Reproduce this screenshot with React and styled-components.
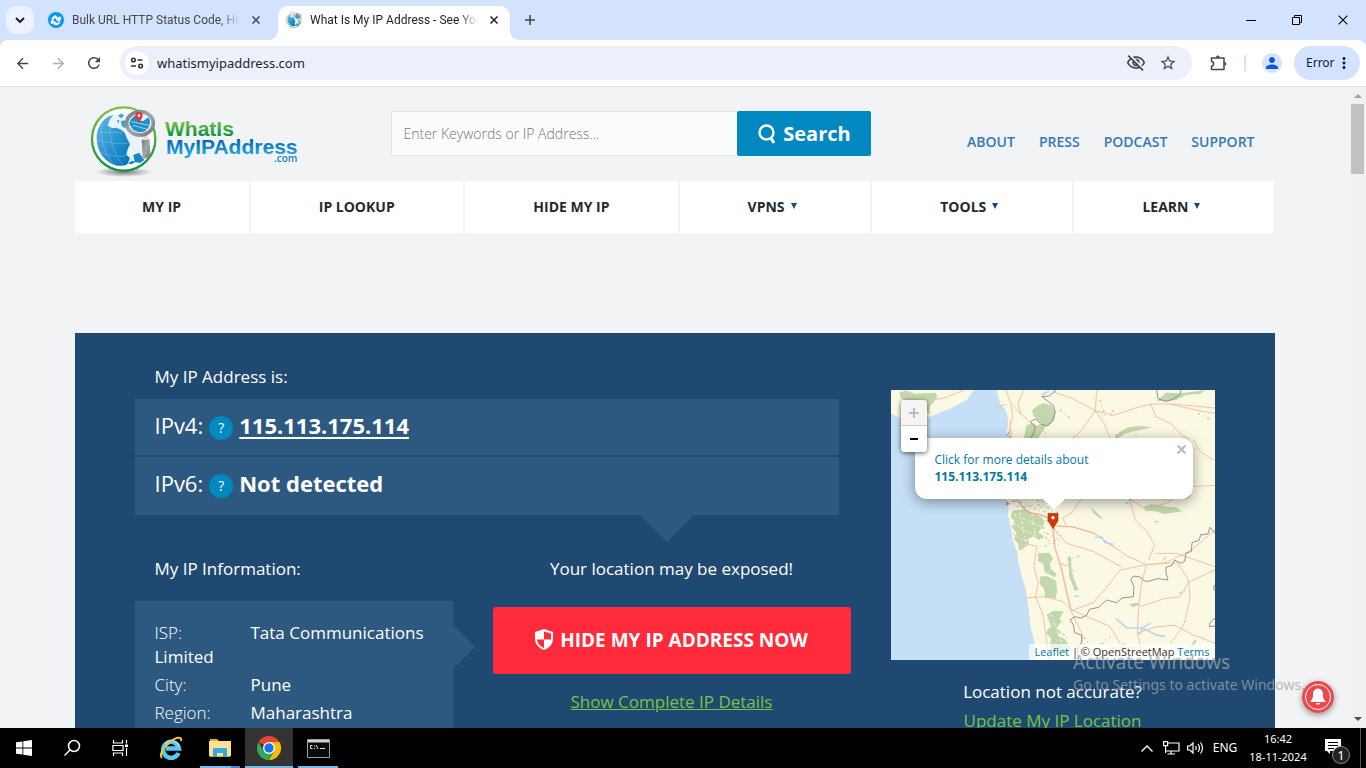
import React from "react";
import styled, { createGlobalStyle } from "styled-components";
import {
  MdArrowBack,
  MdArrowForward,
  MdRefresh,
  MdStarBorder,
  MdOutlineVisibilityOff,
  MdPerson,
  MdMoreVert,
} from "react-icons/md";

const GlobalStyle = createGlobalStyle`
  * { box-sizing: border-box; }
  html, body, #root { height: 100%; margin: 0; }
  body { overflow: hidden; font-family: "Open Sans", "Noto Sans", sans-serif; }
  button { border: 0; padding: 0; margin: 0; background: none; font: inherit; color: inherit; }
  a { color: inherit; text-decoration: none; }
  p, h2, ul { margin: 0; padding: 0; font-weight: inherit; }
  svg { display: block; flex: none; }
`;

const Desktop = styled.div`
  display: flex;
  flex-direction: column;
  height: 100vh;
  overflow: hidden;
  background: #d3e2fd;
`;

/* ---------- browser chrome ---------- */

const TabStrip = styled.div`
  display: flex;
  height: 40px;
  flex: none;
  padding-left: 6px;
  background: #d3e2fd;
`;

const TabSearch = styled.button`
  display: grid;
  place-items: center;
  width: 28px;
  height: 28px;
  margin-top: 6px;
  border-radius: 10px;
  background: #ecf2fe;
`;

const Tab = styled.div`
  position: relative;
  display: flex;
  align-items: center;
  gap: 8px;
  width: ${(p) => (p.$active ? 232 : 244)}px;
  height: 34px;
  margin-top: 6px;
  padding: ${(p) => (p.$active ? "0 8px 6px" : "0 14px 6px")};
  border-radius: 10px 10px 0 0;
  background: ${(p) => (p.$active ? "#fff" : "transparent")};
  color: ${(p) => (p.$active ? "#1f1f1f" : "#474747")};
  &::before, &::after {
    content: "";
    display: ${(p) => (p.$active ? "block" : "none")};
    position: absolute;
    bottom: 0;
    width: 10px;
    height: 10px;
  }
  &::before {
    left: -10px;
    background: radial-gradient(circle at 0 0, transparent 10px, #fff 10px);
  }
  &::after {
    right: -10px;
    background: radial-gradient(circle at 100% 0, transparent 10px, #fff 10px);
  }
`;

const TabTitle = styled.span`
  flex: 1;
  overflow: hidden;
  white-space: nowrap;
  font: 12px/18px Roboto, "Noto Sans", sans-serif;
  mask-image: linear-gradient(to right, #000 calc(100% - 20px), transparent);
`;

const IconButton = styled.button`
  display: grid;
  place-items: center;
  flex: none;
  width: ${(p) => p.$w || 28}px;
  height: ${(p) => p.$h || 28}px;
  color: ${(p) => p.$color || "#474747"};
`;

const NewTab = styled(IconButton)`
  margin: 6px 0 0 6px;
`;

const WindowControls = styled.div`
  display: flex;
  margin-left: auto;
`;

const Toolbar = styled.div`
  display: flex;
  align-items: center;
  flex: none;
  height: 47px;
  padding: 0 6px 0 8px;
  border-bottom: 1px solid #dfe1e4;
  border-radius: 8px 8px 0 0;
  background: #fff;
`;

const NavButtons = styled.div`
  display: flex;
  gap: 8px;
  margin-right: 12px;
`;

const Omnibox = styled.div`
  display: flex;
  align-items: center;
  flex: 1;
  height: 34px;
  padding: 0 10px 0 5px;
  border-radius: 17px;
  background: #ecf0fa;
`;

const SiteInfo = styled.button`
  display: grid;
  place-items: center;
  width: 24px;
  height: 24px;
  border-radius: 50%;
  background: #fff;
`;

const UrlInput = styled.input`
  flex: 1;
  min-width: 0;
  margin-left: 8px;
  padding: 0;
  border: 0;
  outline: 0;
  background: none;
  color: #1f1f1f;
  font: 13px/20px "Noto Sans", sans-serif;
`;

const OmniActions = styled.div`
  display: flex;
  gap: 4px;
`;

const ToolbarDivider = styled.span`
  width: 2px;
  height: 16px;
  margin-right: 12px;
  background: #d3e2fd;
`;

const Avatar = styled.button`
  display: grid;
  place-items: center;
  width: 20px;
  height: 20px;
  margin: 0 12px 0 4px;
  border-radius: 50%;
  background: #d3e2fd;
  color: #0b57d0;
`;

const ErrorChip = styled.button`
  display: flex;
  align-items: center;
  height: 34px;
  width: 66px;
  padding-left: 12px;
  border-radius: 17px;
  background: #d3e2fd;
  color: #041e49;
  font: 12px/16px "Noto Sans", sans-serif;
`;

/* ---------- web page ---------- */

const Viewport = styled.div`
  position: relative;
  display: flex;
  flex: 1;
  min-height: 0;
  background: #f1f3f5;
`;

const Page = styled.main`
  flex: 1;
  min-width: 0;
  overflow: hidden;
`;

const Container = styled.div`
  max-width: 1200px;
  margin: 0 auto;
`;

const Scrollbar = styled.div`
  display: flex;
  flex-direction: column;
  align-items: center;
  width: 17px;
  padding: 7px 0;
  background: #f1f1f1;
`;

const Thumb = styled.div`
  width: 13px;
  height: 70px;
  margin: 6px 0 auto;
  background: #c1c1c1;
`;

const Header = styled.header`
  display: flex;
  height: 94px;
  padding: 0 20px 0 15px;
`;

const LogoLink = styled.a`
  width: 301px;
  padding-top: 18px;
`;

const SearchForm = styled.form`
  display: flex;
  width: 480px;
  height: 45px;
  margin-top: 24px;
`;

const SearchInput = styled.input`
  flex: 1;
  min-width: 0;
  padding: 0 12px;
  border: 1px solid #e3e5e6;
  border-right: 0;
  background: #fcfcfc;
  font: 300 14px/20px "Open Sans", sans-serif;
  &::placeholder { color: #777; opacity: 1; }
`;

const SearchButton = styled.button`
  display: flex;
  align-items: center;
  justify-content: center;
  gap: 7px;
  width: 134px;
  padding-left: 2px;
  border-radius: 2px;
  background: #0088c1;
  color: #fff;
  font-size: 20px;
  font-weight: 700;
`;

const TopLinks = styled.nav`
  display: flex;
  gap: 24px;
  margin: 44px 0 0 auto;
  color: #337ab7;
  font-size: 14px;
  font-weight: 600;
  line-height: 22px;
`;

const MainMenu = styled.nav`
  display: grid;
  grid-template-columns: 174fr 212fr 213fr 190fr 200fr 200fr;
  gap: 2px;
`;

const MenuItem = styled.a`
  display: flex;
  align-items: center;
  justify-content: center;
  gap: 6px;
  height: 52px;
  padding: 0 ${(p) => (p.$drop ? 6 : 0)}px 2px 0;
  background: #fff;
  color: #24292f;
  font-size: 14px;
  font-weight: 700;
`;

const Panel = styled.section`
  display: flex;
  justify-content: space-between;
  min-height: 560px;
  margin-top: 100px;
  padding: 32px 60px;
  background: #1f4971;
  color: #fff;
  font-size: 17px;
`;

const MainColumn = styled.div`
  width: 704px;
`;

const Caption = styled.h2`
  padding-left: ${(p) => (p.$center ? 0 : 20)}px;
  text-align: ${(p) => (p.$center ? "center" : "left")};
  font-size: 17px;
  font-weight: 400;
  line-height: 24px;
`;

const AddressBox = styled.div`
  position: relative;
  display: grid;
  gap: 2px;
  margin-top: 10px;
  &::after {
    content: "";
    position: absolute;
    top: 100%;
    left: 505px;
    border: 27px solid transparent;
    border-top-color: #2d5980;
    border-bottom: 0;
  }
`;

const AddressRow = styled.div`
  display: flex;
  align-items: flex-start;
  gap: 6px;
  height: 56px;
  padding: 11px 0 0 20px;
  background: #2d5980;
  font-size: 22px;
  line-height: 30px;
  &:last-child { height: 58px; }
`;

const Help = styled.button`
  width: 24px;
  height: 24px;
  margin-top: 6px;
  border-radius: 50%;
  background: #0088c1;
  font-size: 14px;
  line-height: 24px;
`;

const AddressValue = styled.strong`
  font-weight: 700;
  a { text-decoration: underline; text-underline-offset: 3px; text-decoration-thickness: 2px; }
`;

const InfoColumns = styled.div`
  display: grid;
  grid-template-columns: 318px 358px;
  gap: 40px;
  margin-top: 42px;
`;

const InfoBox = styled.div`
  position: relative;
  min-height: 260px;
  margin-top: 20px;
  padding: 20px;
  background: #2d5980;
  &::after {
    content: "";
    position: absolute;
    top: 24px;
    left: 100%;
    border: 22px solid transparent;
    border-left-color: #2d5980;
    border-right: 0;
  }
`;

const InfoRow = styled.p`
  margin-bottom: 4px;
  font-weight: 500;
  line-height: 24px;
`;

const InfoLabel = styled.span`
  display: inline-block;
  width: 96px;
  font-weight: 300;
`;

const HideButton = styled.button`
  display: flex;
  align-items: center;
  justify-content: center;
  gap: 7px;
  width: 100%;
  height: 67px;
  margin: 26px 0 16px;
  padding-bottom: 2px;
  border-radius: 3px;
  background: #ff2b3a;
  font-size: 19px;
  font-weight: 700;
`;

const GreenLink = styled.a`
  display: block;
  margin-top: ${(p) => p.$gap || 0}px;
  color: #76c442;
  text-align: center;
  text-decoration: underline;
  font-size: 17px;
  line-height: 24px;
`;

const MapColumn = styled.div`
  width: 324px;
  padding-top: 25px;
`;

const MapFrame = styled.div`
  position: relative;
  height: 270px;
  margin-bottom: 20px;
  overflow: hidden;
`;

const ZoomControl = styled.div`
  position: absolute;
  top: 10px;
  left: 10px;
  display: flex;
  flex-direction: column;
  border-radius: 4px;
  background: #fff;
  box-shadow: 0 1px 5px rgba(0, 0, 0, 0.65);
  overflow: hidden;
`;

const ZoomButton = styled.button`
  height: 26px;
  width: 26px;
  display: grid;
  place-items: center;
  background: ${(p) => (p.disabled ? "#f4f4f4" : "#fff")};
  border-bottom: ${(p) => (p.disabled ? "1px solid #ccc" : "0")};
  color: ${(p) => (p.disabled ? "#bbb" : "#000")};
`;

const Popup = styled.div`
  position: absolute;
  top: 48px;
  left: 24px;
  width: 278px;
  padding: 13px 20px 14px;
  border-radius: 12px;
  background: #fff;
  box-shadow: 0 3px 14px rgba(0, 0, 0, 0.4);
  color: #0078a8;
  font-size: 12px;
  line-height: 17px;
  &::after {
    content: "";
    position: absolute;
    top: 100%;
    left: 128px;
    border: 11px solid transparent;
    border-top-color: #fff;
    border-bottom: 0;
  }
  strong { display: block; }
`;

const PopupClose = styled.button`
  position: absolute;
  top: 7px;
  right: 7px;
`;

const Attribution = styled.div`
  position: absolute;
  right: 0;
  bottom: 0;
  padding: 0 5px;
  background: rgba(255, 255, 255, 0.7);
  color: #333;
  font-size: 11px;
  line-height: 16px;
  white-space: nowrap;
  a { color: #0078a8; }
`;

const Watermark = styled.div`
  position: absolute;
  right: 59px;
  bottom: 33px;
  width: 234px;
  color: rgba(160, 165, 170, 0.75);
  font: 14px/20px "Noto Sans", sans-serif;
  white-space: nowrap;
  pointer-events: none;
  strong { display: block; font-size: 19px; font-weight: 400; line-height: 26px; }
`;

const BellButton = styled.button`
  position: absolute;
  right: 32px;
  bottom: 15px;
  border-radius: 50%;
  box-shadow: 0 2px 6px rgba(0, 0, 0, 0.4);
`;

/* ---------- taskbar ---------- */

const Taskbar = styled.footer`
  display: flex;
  flex: none;
  justify-content: space-between;
  height: 40px;
  background: #000;
  color: #fff;
  font: 12px/18px "Noto Sans", sans-serif;
`;

const AppButtons = styled.div`
  display: flex;
`;

const AppButton = styled.button`
  position: relative;
  display: grid;
  place-items: center;
  width: 48px;
  height: 40px;
  margin-right: ${(p) => p.$gap || 0}px;
  background: ${(p) => (p.$focused ? "#333" : "transparent")};
  &::after {
    content: "";
    display: ${(p) => (p.$running ? "block" : "none")};
    position: absolute;
    bottom: 0;
    left: ${(p) => (p.$focused ? 0 : 4)}px;
    right: ${(p) => (p.$focused ? 0 : 4)}px;
    height: 2px;
    background: ${(p) => (p.$stacked ? "linear-gradient(to right, #76b9ed 31px, #4f86b5 31px)" : "#76b9ed")};
  }
`;

const Tray = styled.div`
  display: flex;
  align-items: center;
`;

const TrayIcon = styled.button`
  display: grid;
  place-items: center;
  width: 24px;
`;

const Language = styled.button`
  width: 36px;
`;

const Clock = styled.time`
  width: 70px;
  font-size: 11px;
  text-align: center;
`;

const Notifications = styled.button`
  position: relative;
  width: 48px;
  height: 40px;
  border-right: 1px solid #555;
  margin-right: 5px;
`;

const NotificationSheet = styled.span`
  position: absolute;
  top: 10px;
  left: 12px;
`;

const NotificationBadge = styled.span`
  position: absolute;
  top: 18px;
  left: 19px;
  width: 18px;
  height: 18px;
  border: 1px solid #888;
  border-radius: 50%;
  background: #222;
  font-size: 13px;
  line-height: 16px;
`;

/* ---------- drawings ---------- */

const Cross = ({ size = 8, width = 2, color = "currentColor" }) => (
  <svg width={size} height={size} viewBox="0 0 8 8" stroke={color} strokeWidth={width} fill="none">
    <path d="M.5 .5 7.5 7.5M7.5 .5 .5 7.5" />
  </svg>
);

const Triangle = ({ up, w = 8, h = 4, color = "#505050" }) => (
  <svg width={w} height={h} viewBox="0 0 8 4" preserveAspectRatio="none" fill={color}>
    <path d={up ? "M0 4 4 0 8 4Z" : "M0 0 8 0 4 4Z"} />
  </svg>
);

const BulkFavicon = () => (
  <svg width="16" height="16" viewBox="0 0 48 48">
    <circle cx="24" cy="24" r="24" fill="#0a97f8" />
    <path d="M14 15 22 9 30 17 36 12 40 20 34 29 28 27 20 19 14 24 10 20Z" fill="#fff" />
    <path d="M9 26 15 21 21 29 28 31 34 27 36 34 28 40 19 39 17 34 11 37 8 32Z" fill="#fff" />
    <path d="M24 20 17 27M31 29 26 33" stroke="#0a97f8" strokeWidth="4" />
  </svg>
);

const Globe = ({ size, id }) => (
  <svg width={size} height={size} viewBox="48 30 200 204">
    <defs>
      <linearGradient id={`ring${id}`} x1="0" y1="0" x2="0" y2="1">
        <stop offset="0" stopColor="#7fc241" />
        <stop offset="1" stopColor="#0b9444" />
      </linearGradient>
      <linearGradient id={`sea${id}`} x1="0" y1="0" x2="1" y2="1">
        <stop offset="0" stopColor="#5cb8e6" />
        <stop offset="1" stopColor="#0072b8" />
      </linearGradient>
      <linearGradient id={`metal${id}`} x1="0" y1="0" x2="1" y2="1">
        <stop offset="0" stopColor="#77797c" />
        <stop offset=".5" stopColor="#a5a8aa" />
        <stop offset="1" stopColor="#77797c" />
      </linearGradient>
    </defs>
    <circle cx="147" cy="132" r="95" fill="#fff" stroke={`url(#ring${id})`} strokeWidth="7" />
    <circle cx="143" cy="133" r="79" fill="#e9f4fa" />
    <path d="M66 120C70 96 82 76 100 65L116 60 104 76 99 92 112 99 126 98 142 106 150 113 156 128 166 148 160 160 155 178 166 190 158 208C145 214 128 214 114 208 84 194 64 164 66 120Z" fill={`url(#sea${id})`} />
    <path d="M130 62 140 56 148 61 140 70ZM138 79 149 76 157 87 151 100 142 94ZM126 77 134 74 132 85Z" fill="#36a3da" />
    <path d="M176 180 193 173 209 195 196 204 180 201ZM159 205 172 197 183 201 171 208Z" fill="#1687c8" />
    <g fill="none" stroke="#a9dcf3" strokeWidth="1.2" opacity=".8">
      <path d="M66 135C92 142 136 150 165 143M76 171C105 185 145 188 166 178M84 85C72 128 90 180 119 209M108 66C100 112 113 176 145 210M72 113 140 112" />
    </g>
    <path d="M201 134 225 132 227 187 204 192Z" fill={`url(#metal${id})`} />
    <path d="M207 120h13v15h-13z" fill="#dedede" />
    <ellipse cx="196" cy="85" rx="40" ry="35" fill="#eaf5fb" stroke={`url(#metal${id})`} strokeWidth="11" />
    <path d="M164 88C166 69 180 60 195 58L187 72 204 79 222 67C231 84 224 102 208 110L192 112 176 105Z" fill="#1d90cd" />
    <path d="M175 91 218 103M170 80 224 91" stroke="#dff2fb" strokeWidth="2" />
    <path d="M193 84C189 74 182 70 182 62a11 11 0 0 1 22 0c0 8-7 12-11 22Z" fill="#e23a2e" />
    <circle cx="193" cy="62" r="4" fill="#fff" />
  </svg>
);

const Logo = () => (
  <svg width="212" height="76" viewBox="0 0 212 76">
    <defs>
      <linearGradient id="wordGreen" x1="0" y1="0" x2="0" y2="1">
        <stop offset=".2" stopColor="#7dc142" />
        <stop offset=".8" stopColor="#089447" />
      </linearGradient>
      <linearGradient id="wordBlue" x1="0" y1="0" x2="0" y2="1">
        <stop offset=".2" stopColor="#0063b4" />
        <stop offset=".8" stopColor="#22a3e0" />
      </linearGradient>
      <radialGradient id="ground">
        <stop offset="0" stopColor="#000" stopOpacity=".5" />
        <stop offset="1" stopColor="#000" stopOpacity="0" />
      </radialGradient>
    </defs>
    <ellipse cx="34" cy="67" rx="28" ry="5" fill="url(#ground)" />
    <Globe size={68} id="Logo" />
    <g fontFamily="Liberation Sans, Arial, sans-serif" fontWeight="700" fontSize="21">
      <text x="75" y="31" fill="url(#wordGreen)">WhatIs</text>
      <text x="76" y="49" fill="url(#wordBlue)">MyIPAddress</text>
    </g>
    <text x="184" y="57" fill="#1583c6" fontFamily="Open Sans, sans-serif" fontWeight="600" fontSize="10">.com</text>
  </svg>
);

const TuneIcon = () => (
  <svg width="14" height="12" viewBox="0 0 14 12" fill="none" stroke="#333" strokeWidth="1.6">
    <circle cx="3.4" cy="3" r="1.8" />
    <path d="M7.5 3h5M1 9h5" />
    <circle cx="10.6" cy="9" r="1.8" />
  </svg>
);

const PuzzleIcon = () => (
  <svg width="18" height="18" viewBox="0 0 18 18">
    <path d="M2.500 4H15V15.500H2.500V12.300A2.600 2.600 0 0 0 2.500 7.200Z" fill="none" stroke="#474747" strokeWidth="1.500" strokeLinejoin="round" />
    <path d="M7 3.500a1.900 1.900 0 0 1 3.800 0ZM15.500 7.900a1.900 1.900 0 0 1 0 3.800Z" fill="#474747" />
  </svg>
);

const SearchGlyph = () => (
  <svg width="18" height="20" viewBox="0 0 18 20" fill="none" stroke="#fff">
    <circle cx="8.500" cy="8.500" r="7" strokeWidth="2.400" />
    <path d="M12.500 13.500 16 19" strokeWidth="3" />
  </svg>
);

const ShieldIcon = () => (
  <svg width="18" height="21" viewBox="0 0 18 21">
    <path d="M9 0 18 3V10C18 15 14 19 9 21 4 19 0 15 0 10V3Z" fill="#fff" />
    <path d="M9 10.500V2.500L16 4.600V10.500ZM9 10.500H2C2.500 14.500 5 17.500 9 19Z" fill="#ff2b3a" />
  </svg>
);

const BellIcon = () => (
  <svg width="32" height="32" viewBox="0 0 32 32">
    <circle cx="16" cy="16" r="16" fill="#e9484d" />
    <circle cx="16" cy="16" r="12.500" fill="none" stroke="#fff" strokeWidth="1" />
    <path d="M16 7.500c-3.500.4-5 2.700-5 6 0 3.700-.6 4.800-2.500 6.500v1h15v-1c-1.900-1.700-2.500-2.800-2.500-6.500 0-3.300-1.500-5.600-5-6ZM13.800 22a2.300 2.300 0 0 0 4.400 0Z" fill="#fff" />
  </svg>
);

const forests = [
  "M58 38 78 31 104 41 166 38 172 50 160 68 150 76 146 98 126 88 112 64 88 68 62 54Z",
  "M456 90 474 76 492 70 514 76 526 96 522 122 506 138 492 140 478 124 460 108Z",
  "M438 138 456 128 470 136 484 132 496 142 484 160 470 180 432 176Z",
  "M830 62 858 38 900 40 975 31 960 42 920 44 888 60 858 64Z",
  "M704 166 744 142 780 138 816 142 780 150 738 160 708 178Z",
  "M790 380 816 372 860 380 888 382 906 394 876 398 852 402 826 394 796 392Z",
  "M398 392 432 388 460 400 484 410 494 424 486 444 474 456 494 470 476 480 462 468 444 478 448 494 418 512 414 490 402 478 410 460 394 440 404 424 392 410Z",
  "M474 520 508 518 520 536 510 548 512 566 530 582 524 592 494 576 490 552 474 544Z",
  "M480 590 500 588 528 602 532 634 526 656 496 652 492 626 478 610Z",
  "M500 704 520 692 552 694 538 716 546 724 530 744 544 756 532 766 556 778 570 802 562 820 520 816 508 802 514 776 498 758 512 736Z",
  "M564 528 574 532 574 566 582 598 596 630 584 632 568 590Z",
  "M632 380 642 390 664 410 670 416 658 414 640 398Z",
  "M886 344 904 336 934 346 924 356 896 352Z",
  "M746 672 770 668 782 672 760 682Z",
  "M930 798 944 780 950 782 940 800Z",
];

const roads = [
  "M378 30 392 70 398 110 388 140 392 176 M392 70 430 108 466 140 500 160 M350 80 378 74 M430 30 414 72 424 106",
  "M650 30 646 92 604 152 560 190 M646 92 700 106 760 86 812 72 880 72 1005 84 M646 92 574 54 520 36 M646 92 672 130 690 174",
  "M812 72 828 110 874 132 908 168 930 178 M940 180 960 214 1000 240 M1005 100 946 90 870 72",
  "M518 446 524 504 542 560 560 640 572 690 606 762 606 840",
  "M526 438 576 440 640 458 700 500 742 528 800 554 M520 446 560 490 640 514 724 560 M800 554 720 570 680 622 640 668 580 690",
  "M800 554 858 548 934 510 1005 450 M800 554 784 610 776 680 772 760 784 810 M800 554 892 548 920 590 926 606 M926 606 900 650 852 656 780 680",
  "M926 606 930 654 918 710 908 742 870 790 M926 606 1005 570 M772 760 830 740 884 736 930 760 1005 790",
  "M806 540 824 494 800 454 766 420 748 356 M748 356 790 384 860 370 930 320 1005 316 M824 520 888 520 1005 560",
  "M436 654 490 650 548 664 574 690 M396 458 440 490 470 500 M470 500 462 560 474 610 466 650 488 700 500 780 506 840",
  "M536 550 566 558 584 574 M560 440 548 414 576 398 604 356 M574 690 600 700 690 740 720 790 740 840 M650 840 690 806 770 800",
  "M60 48 130 66 200 52 252 30 M120 66 150 100",
];

const borders = [
  "M486 50 508 48 528 30 M486 50 504 64 520 76 526 96 518 122 500 138 482 132 470 118 458 120 452 126 466 142 460 162 452 174",
  "M830 30 834 56 858 64 878 58 902 42 902 30",
  "M1005 460 990 442 984 462 962 464 958 480 936 488 934 514 918 520 914 544 902 550 884 540 876 556 858 562 858 578 864 600 832 596 806 604 790 602 782 592 762 588 752 598 762 620 760 650 726 654 710 668 680 660 656 682 628 688 620 706 602 714 584 710 570 720 580 734 584 758 606 766 604 788 592 802 594 840",
  "M1005 714 990 728 988 740 1005 738M1005 614 1000 624 1005 632M388 154 382 166 392 174M384 364 380 374 390 370",
];

const TerrainMap = () => (
  <svg width="324" height="270" viewBox="33 30 972 810" aria-label="Map of western India">
    <rect x="33" y="30" width="972" height="810" fill="#fbf9e4" />
    <path d="M33 100 64 116 84 114 116 124 146 112 180 98 214 84 260 60 282 30 350 30 360 70 380 96 386 128 380 150 384 176 376 220 382 280 378 340 374 364 386 384 384 404 392 440 398 480 412 516 414 540 426 590 438 630 446 690 452 740 464 790 466 840 33 840Z" fill="#c5dff6" />
    <g fill="#c2d7ab">
      {forests.map((d) => <path key={d} d={d} />)}
    </g>
    <g fill="none" stroke="#fbf9e4" strokeWidth="4" strokeDasharray="6 11 3 7">
      <path d="M404 404 484 440M400 430 470 470M410 470 450 486M420 398 440 500M456 402 466 470M512 704 556 812M510 740 550 730" />
    </g>
    <g fill="none" stroke="#c2d7ab" strokeWidth="5" strokeDasharray="7 9 3 12">
      <path d="M540 90 570 114M700 90 690 112M724 202 750 190M494 500 516 486 548 472 M562 540 604 526M548 760 566 780M612 772 624 788M640 210 652 192M854 360 880 330M898 640 916 630M704 812 740 786M916 224 946 206M954 100 990 118 M410 380 480 374 540 400M500 420 544 468" />
      <path d="M420 366 470 384 520 376M430 380 500 396M470 360 540 380M490 440 500 480 540 500M500 460 530 476M640 812 690 770M750 210 770 160M660 60 680 120" />
    </g>
    <g fill="none" stroke="#f5c2a4" strokeWidth="3">
      {roads.map((d) => <path key={d} d={d} />)}
    </g>
    <g fill="none" stroke="#f2a3a0" strokeWidth="4">
      <path d="M414 362 428 382 450 398 480 404 504 414 516 436M376 360 384 376M392 364 414 362" />
    </g>
    <g fill="none" stroke="#ee8f6d" strokeWidth="2" opacity=".7">
      <path d="M520 446 526 504 544 560 562 640 574 690M392 120 394 172M646 90v4M534 438 582 442 642 460 704 502" />
    </g>
    <g fill="none" stroke="#b9d6f3" strokeWidth="5" strokeLinejoin="round">
      <path d="M644 474 664 470 676 488 700 492M708 716 740 744 790 744 826 764 856 770M776 764 792 740 812 730M484 44 508 34M736 368 746 370M824 426 836 424M850 540 858 530M584 650 598 648" />
    </g>
    <g fill="none" stroke="#827d88" strokeWidth="2.500">
      {borders.map((d) => <path key={d} d={d} />)}
    </g>
    <g stroke="#8c4a1e" strokeWidth="2">
      <path d="M504 400H534V422L519 446 504 422Z" fill="#d93600" />
      <circle cx="519" cy="413" r="6" fill="#fff" />
    </g>
  </svg>
);

const WindowsLogo = () => (
  <svg width="16" height="16" viewBox="0 0 16 16" fill="#fff">
    <path d="M0 2.300 6.500 1.400V7.600H0ZM7.300 1.300 16 0V7.600H7.300ZM0 8.400H6.500V14.600L0 13.700ZM7.300 8.400H16V16L7.300 14.700Z" />
  </svg>
);

const TaskSearch = () => (
  <svg width="18" height="18" viewBox="0 0 18 18" fill="none" stroke="#fff" strokeWidth="1.500">
    <circle cx="11" cy="7" r="5.500" />
    <path d="M7 11 1.500 16.500" />
  </svg>
);

const TaskView = () => (
  <svg width="17" height="16" viewBox="0 0 17 16" fill="none" stroke="#fff" strokeWidth="1.200">
    <path d="M1.500 0v3h9V0M1.500 16v-3h9v3M.900 5.500h10.200v5H.900ZM14.500 0v3.500M14.500 8v8" />
    <path d="M13 4.500h3v2.500h-3z" fill="#fff" stroke="none" />
  </svg>
);

const ExplorerE = () => (
  <svg width="24" height="24" viewBox="0 0 24 24" fill="none">
    <path d="M19.500 17A8 8 0 1 1 20 12.500H7" stroke="#58c7f3" strokeWidth="4.500" />
    <path d="M20 10.500A8 8 0 0 0 6 8" stroke="#9be2fb" strokeWidth="1.500" />
    <path d="M3 22C0 19 4 11 11 6 18 .500 23 .500 22 5" stroke="#f3c22b" strokeWidth="2" />
  </svg>
);

const FolderIcon = () => (
  <svg width="22" height="20" viewBox="0 0 22 20">
    <path d="M1 1h7l2 2h11v16H1z" fill="#e3ad2c" />
    <path d="M0 3h22v15H0z" fill="#fbe190" />
    <path d="M4 19v-8q0-1 1-1h12q1 0 1 1v8h-4v-4H8v4z" fill="#35a9e5" />
  </svg>
);

const ChromeIcon = () => (
  <svg width="24" height="24" viewBox="0 0 24 24">
    <path d="M12 12 1.600 6A12 12 0 0 1 22.400 6Z" fill="#ea4335" />
    <path d="M12 6H22.400A12 12 0 0 1 12 24L17.200 15Z" fill="#fbbc05" />
    <path d="M6.800 15 1.600 6A12 12 0 0 0 12 24L17.200 15Z" fill="#34a853" />
    <circle cx="12" cy="12" r="6" fill="#fff" />
    <circle cx="12" cy="12" r="4.700" fill="#1a73e8" />
  </svg>
);

const ConsoleIcon = () => (
  <svg width="23" height="19" viewBox="0 0 23 19">
    <path d="M.500 .500h22v18H.500z" fill="#0a0a0a" stroke="#98a0a6" />
    <path d="M1 1h21v2.500H1z" fill="#ccd3d8" />
    <path d="M5.500 6.500H3.500V9.500H5.500M7.500 6.500v1M7.500 9v1M9 6 11 10M13 9.500h5" fill="none" stroke="#ddd" />
  </svg>
);

const NetworkIcon = () => (
  <svg width="17" height="14" viewBox="0 0 17 14" fill="none" stroke="#fff" strokeWidth="1.200">
    <path d="M5 2H16v8H3M8 10v3M4.500 13H12M.600 .600h4v4h-4ZM2.600 4.600V12" />
  </svg>
);

const SpeakerIcon = () => (
  <svg width="17" height="14" viewBox="0 0 17 14" fill="none" stroke="#fff" strokeWidth="1.200">
    <path d="M.600 5v4H3l3 3V2L3 5ZM8.500 5q1.500 2 0 4M11 3q3 4 0 8M13.500 1.500q4 5.500 0 11" />
  </svg>
);

const menu = [
  { label: "MY IP" },
  { label: "IP LOOKUP" },
  { label: "HIDE MY IP" },
  { label: "VPNS", drop: true },
  { label: "TOOLS", drop: true },
  { label: "LEARN", drop: true },
];

const info = [
  ["ISP:", "Tata Communications Limited"],
  ["City:", "Pune"],
  ["Region:", "Maharashtra"],
];

const BrowserChrome = () => (
  <>
    <TabStrip>
      <TabSearch aria-label="Search tabs">
        <svg width="10" height="6" viewBox="0 0 10 6" fill="none" stroke="#1f1f1f" strokeWidth="2">
          <path d="M1 1 5 5 9 1" />
        </svg>
      </TabSearch>
      <Tab>
        <BulkFavicon />
        <TabTitle>Bulk URL HTTP Status Code, Header</TabTitle>
        <IconButton $w={16} $h={16} aria-label="Close tab"><Cross width={1.5} /></IconButton>
      </Tab>
      <Tab $active>
        <Globe size={16} id="Tab" />
        <TabTitle>What Is My IP Address - See Your</TabTitle>
        <IconButton $w={16} $h={16} $color="#1f1f1f" aria-label="Close tab"><Cross width={1.5} /></IconButton>
      </Tab>
      <NewTab aria-label="New tab">
        <svg width="10" height="10" viewBox="0 0 10 10" stroke="currentColor" strokeWidth="1.600"><path d="M5 0V10M0 5H10" /></svg>
      </NewTab>
      <WindowControls>
        <IconButton $w={46} $h={40} $color="#000" aria-label="Minimize">
          <svg width="10" height="10" viewBox="0 0 10 10"><path d="M0 5h10v1H0z" /></svg>
        </IconButton>
        <IconButton $w={46} $h={40} $color="#000" aria-label="Restore">
          <svg width="10" height="10" viewBox="0 0 10 10" fill="none" stroke="#000"><path d="M.500 2.500h7v7h-7zM2.500 2V.500h7v7H8" /></svg>
        </IconButton>
        <IconButton $w={46} $h={40} $color="#000" aria-label="Close"><Cross size={10} width={0.9} /></IconButton>
      </WindowControls>
    </TabStrip>
    <Toolbar>
      <NavButtons>
        <IconButton aria-label="Back"><MdArrowBack size={17} /></IconButton>
        <IconButton $color="#b0b0b0" aria-label="Forward"><MdArrowForward size={17} /></IconButton>
        <IconButton aria-label="Reload"><MdRefresh size={18} /></IconButton>
      </NavButtons>
      <Omnibox>
        <SiteInfo aria-label="View site information"><TuneIcon /></SiteInfo>
        <UrlInput aria-label="Address" defaultValue="whatismyipaddress.com" />
        <OmniActions>
          <IconButton aria-label="Cookies blocked"><MdOutlineVisibilityOff size={20} /></IconButton>
          <IconButton aria-label="Bookmark"><MdStarBorder size={18} /></IconButton>
        </OmniActions>
      </Omnibox>
      <IconButton $w={52} aria-label="Extensions"><PuzzleIcon /></IconButton>
      <ToolbarDivider />
      <Avatar aria-label="Profile"><MdPerson size={18} /></Avatar>
      <ErrorChip>Error<MdMoreVert size={18} /></ErrorChip>
    </Toolbar>
  </>
);

export default function App() {
  return (
    <Desktop>
      <GlobalStyle />
      <BrowserChrome />
      <Viewport>
        <Page>
          <Container>
            <Header>
              <LogoLink href="#home" aria-label="WhatIsMyIPAddress.com"><Logo /></LogoLink>
              <SearchForm onSubmit={(e) => e.preventDefault()}>
                <SearchInput aria-label="Search" placeholder="Enter Keywords or IP Address..." />
                <SearchButton type="submit"><SearchGlyph />Search</SearchButton>
              </SearchForm>
              <TopLinks>
                <a href="#about">ABOUT</a>
                <a href="#press">PRESS</a>
                <a href="#podcast">PODCAST</a>
                <a href="#support">SUPPORT</a>
              </TopLinks>
            </Header>
            <MainMenu>
              {menu.map((m) => (
                <MenuItem key={m.label} $drop={m.drop} href={`#${m.label}`}>
                  {m.label}
                  {m.drop && <Triangle w={6} h={6} color="#1f4971" />}
                </MenuItem>
              ))}
            </MainMenu>
            <Panel>
              <MainColumn>
                <Caption>My IP Address is:</Caption>
                <AddressBox>
                  <AddressRow>
                    IPv4:<Help aria-label="About IPv4">?</Help>
                    <AddressValue><a href="#ip">115.113.175.114</a></AddressValue>
                  </AddressRow>
                  <AddressRow>
                    IPv6:<Help aria-label="About IPv6">?</Help>
                    <AddressValue>Not detected</AddressValue>
                  </AddressRow>
                </AddressBox>
                <InfoColumns>
                  <div>
                    <Caption>My IP Information:</Caption>
                    <InfoBox>
                      {info.map(([k, v]) => (
                        <InfoRow key={k}><InfoLabel>{k}</InfoLabel>{v}</InfoRow>
                      ))}
                    </InfoBox>
                  </div>
                  <div>
                    <Caption $center>Your location may be exposed!</Caption>
                    <HideButton><ShieldIcon />HIDE MY IP ADDRESS NOW</HideButton>
                    <GreenLink href="#details">Show Complete IP Details</GreenLink>
                  </div>
                </InfoColumns>
              </MainColumn>
              <MapColumn>
                <MapFrame>
                  <TerrainMap />
                  <Popup>
                    <a href="#ip">Click for more details about <strong>115.113.175.114</strong></a>
                    <PopupClose aria-label="Close popup"><Cross size={9} width={2} color="#bbb" /></PopupClose>
                  </Popup>
                  <ZoomControl>
                    <ZoomButton disabled aria-label="Zoom in">
                      <svg width="10" height="10" viewBox="0 0 10 10" stroke="currentColor" strokeWidth="2"><path d="M5 0V10M0 5H10" /></svg>
                    </ZoomButton>
                    <ZoomButton aria-label="Zoom out">
                      <svg width="8" height="2" viewBox="0 0 8 2"><path d="M0 0h8v2H0z" /></svg>
                    </ZoomButton>
                  </ZoomControl>
                  <Attribution>
                    <a href="#leaflet">Leaflet</a> | © OpenStreetMap <a href="#terms">Terms</a>
                  </Attribution>
                </MapFrame>
                <Caption $center>Location not accurate?</Caption>
                <GreenLink $gap={5} href="#update">Update My IP Location</GreenLink>
              </MapColumn>
            </Panel>
          </Container>
        </Page>
        <Scrollbar>
          <Triangle up color="#a3a3a3" />
          <Thumb />
          <Triangle />
        </Scrollbar>
        <Watermark>
          <strong>Activate Windows</strong>
          Go to Settings to activate Windows.
        </Watermark>
        <BellButton aria-label="Notifications"><BellIcon /></BellButton>
      </Viewport>
      <Taskbar>
        <AppButtons>
          <AppButton aria-label="Start"><WindowsLogo /></AppButton>
          <AppButton aria-label="Search"><TaskSearch /></AppButton>
          <AppButton $gap={3} aria-label="Task view"><TaskView /></AppButton>
          <AppButton $gap={1} aria-label="Internet Explorer"><ExplorerE /></AppButton>
          <AppButton $gap={1} $running $stacked aria-label="File Explorer"><FolderIcon /></AppButton>
          <AppButton $gap={1} $running $focused aria-label="Chrome"><ChromeIcon /></AppButton>
          <AppButton $running aria-label="Command Prompt"><ConsoleIcon /></AppButton>
        </AppButtons>
        <Tray>
          <TrayIcon aria-label="Hidden icons">
            <svg width="12" height="7" viewBox="0 0 12 7" fill="none" stroke="#fff" strokeWidth="1.300"><path d="M.500 6.500 6 1 11.500 6.500" /></svg>
          </TrayIcon>
          <TrayIcon aria-label="Network"><NetworkIcon /></TrayIcon>
          <TrayIcon aria-label="Volume"><SpeakerIcon /></TrayIcon>
          <Language>ENG</Language>
          <Clock>16:42<br />18-11-2024</Clock>
          <Notifications aria-label="Action center">
            <NotificationSheet>
              <svg width="16" height="17" viewBox="0 0 16 17"><path d="M0 1h16v12H5v3l-3-3H0z" fill="#fff" /><path d="M3 4.500h10M3 7.500h10M3 10.500h6" stroke="#000" /></svg>
            </NotificationSheet>
            <NotificationBadge>1</NotificationBadge>
          </Notifications>
        </Tray>
      </Taskbar>
    </Desktop>
  );
}
